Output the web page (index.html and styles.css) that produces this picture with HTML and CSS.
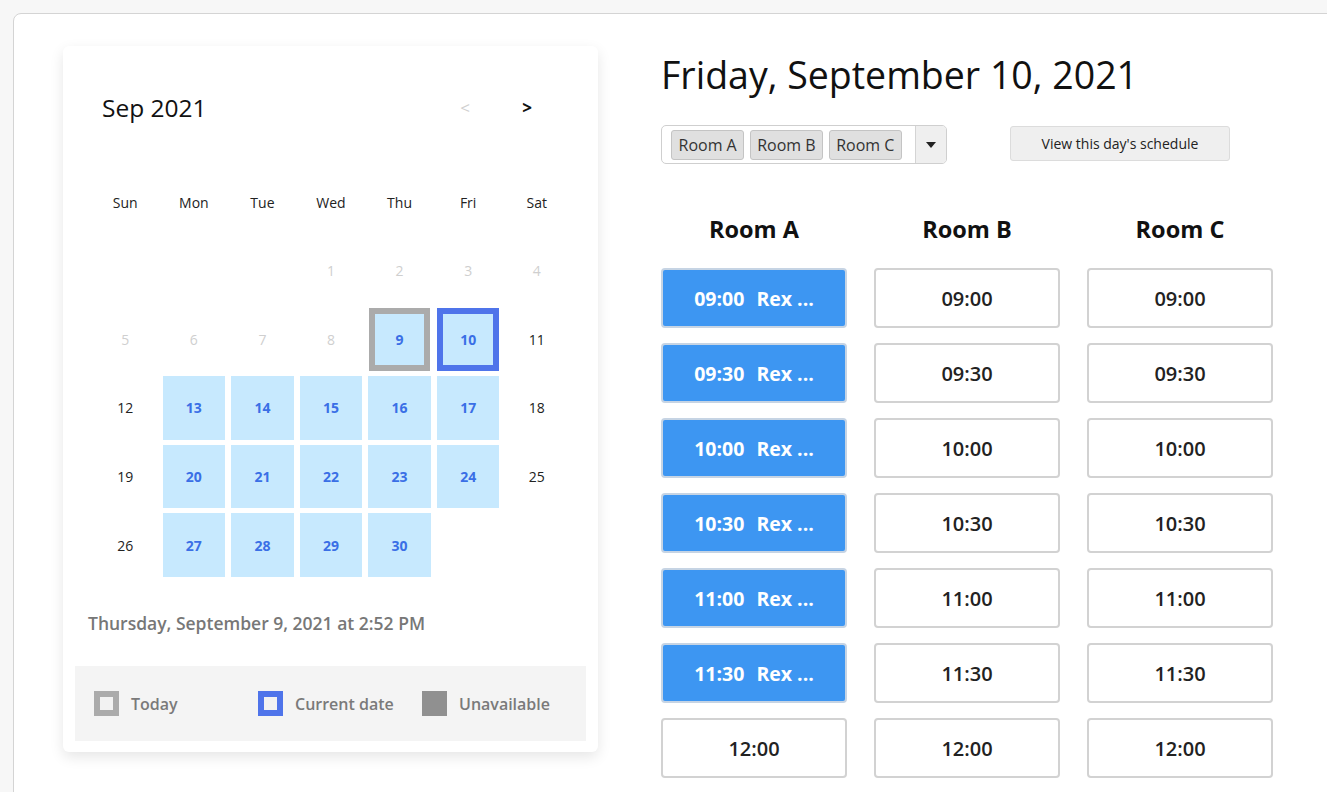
FILE: index.html
```html
<!DOCTYPE html>
<html>
<head>
<meta charset="utf-8">
<link rel="stylesheet" href="styles.css">
</head>
<body>
<div class="page">
  <div class="container">
    <div class="card">
      <div class="cal">
        <div class="cal-head">
          <div class="month">Sep 2021</div>
          <div class="nav">
            <span class="nav-btn prev">&lt;</span>
            <span class="nav-btn next">&gt;</span>
          </div>
        </div>
        <div class="grid">
          <div class="wd">Sun</div><div class="wd">Mon</div><div class="wd">Tue</div><div class="wd">Wed</div><div class="wd">Thu</div><div class="wd">Fri</div><div class="wd">Sat</div>
          <div class="d"></div><div class="d"></div><div class="d"></div>
          <div class="d off">1</div><div class="d off">2</div><div class="d off">3</div><div class="d off">4</div>
          <div class="d off">5</div><div class="d off">6</div><div class="d off">7</div><div class="d off">8</div>
          <div class="d"><span class="box today">9</span></div>
          <div class="d"><span class="box current">10</span></div>
          <div class="d">11</div>
          <div class="d">12</div>
          <div class="d"><span class="box">13</span></div><div class="d"><span class="box">14</span></div><div class="d"><span class="box">15</span></div><div class="d"><span class="box">16</span></div><div class="d"><span class="box">17</span></div>
          <div class="d">18</div>
          <div class="d">19</div>
          <div class="d"><span class="box">20</span></div><div class="d"><span class="box">21</span></div><div class="d"><span class="box">22</span></div><div class="d"><span class="box">23</span></div><div class="d"><span class="box">24</span></div>
          <div class="d">25</div>
          <div class="d">26</div>
          <div class="d"><span class="box">27</span></div><div class="d"><span class="box">28</span></div><div class="d"><span class="box">29</span></div><div class="d"><span class="box">30</span></div>
          <div class="d"></div><div class="d"></div>
        </div>
      </div>
      <div class="now">Thursday, September 9, 2021 at 2:52 PM</div>
      <div class="legend">
        <div class="lg-item"><span class="sw sw-today"></span><span>Today</span></div>
        <div class="lg-item"><span class="sw sw-current"></span><span>Current date</span></div>
        <div class="lg-item"><span class="sw sw-off"></span><span>Unavailable</span></div>
      </div>
    </div>

    <div class="main">
      <h1 class="title">Friday, September 10, 2021</h1>
      <div class="toolbar">
        <div class="multi">
          <div class="tags">
            <span class="tag">Room A</span>
            <span class="tag">Room B</span>
            <span class="tag">Room C</span>
          </div>
          <div class="caret"><svg width="10" height="6" viewBox="0 0 10 6"><path d="M0 0h10L5 6z" fill="#222"/></svg></div>
        </div>
        <button class="btn">View this day's schedule</button>
      </div>
      <div class="rooms">
        <div class="room">
          <div class="room-name">Room A</div>
          <div class="slot busy"><span>09:00</span><span>Rex ...</span></div>
          <div class="slot busy"><span>09:30</span><span>Rex ...</span></div>
          <div class="slot busy"><span>10:00</span><span>Rex ...</span></div>
          <div class="slot busy"><span>10:30</span><span>Rex ...</span></div>
          <div class="slot busy"><span>11:00</span><span>Rex ...</span></div>
          <div class="slot busy"><span>11:30</span><span>Rex ...</span></div>
          <div class="slot">12:00</div>
        </div>
        <div class="room">
          <div class="room-name">Room B</div>
          <div class="slot">09:00</div>
          <div class="slot">09:30</div>
          <div class="slot">10:00</div>
          <div class="slot">10:30</div>
          <div class="slot">11:00</div>
          <div class="slot">11:30</div>
          <div class="slot">12:00</div>
        </div>
        <div class="room">
          <div class="room-name">Room C</div>
          <div class="slot">09:00</div>
          <div class="slot">09:30</div>
          <div class="slot">10:00</div>
          <div class="slot">10:30</div>
          <div class="slot">11:00</div>
          <div class="slot">11:30</div>
          <div class="slot">12:00</div>
        </div>
      </div>
    </div>
  </div>
</div>
</body>
</html>
```

FILE: styles.css
```css
* { box-sizing: border-box; }
html, body { margin: 0; padding: 0; }
body {
  background: #f7f7f7;
  font-family: "Open Sans", "Noto Sans", sans-serif;
  color: #222;
  overflow: hidden;
  width: 1327px;
  height: 792px;
}
.page {
  padding: 13px 0 0 13px;
  height: 792px;
  overflow: hidden;
}
.container {
  width: 1330px;
  height: 900px;
  background: #fff;
  border: 1px solid #d4d4d4;
  border-radius: 8px 0 0 0;
  display: flex;
  align-items: flex-start;
  padding: 32px 0 0 49px;
}
.card {
  width: 535px;
  background: #fff;
  border-radius: 6px;
  box-shadow: 0 5px 14px rgba(0, 0, 0, 0.10);
  padding: 0 12px 11px 12px;
  flex: none;
}
.cal { padding: 0 16px; }
.cal-head {
  height: 122px;
  display: flex;
  align-items: center;
  justify-content: space-between;
  padding: 0 23px 0 11px;
}
.month { font-size: 24.5px; color: #111; }
.nav { display: flex; gap: 22px; }
.nav-btn {
  width: 40px;
  text-align: center;
  font-size: 17px;
  font-weight: 700;
}
.prev { color: #d0d0d0; font-weight: 400; }
.next { color: #111; }
.grid {
  display: grid;
  grid-template-columns: repeat(7, 1fr);
  grid-auto-rows: 68.57px;
  width: 480px;
}
.wd, .d {
  display: flex;
  align-items: center;
  justify-content: center;
  font-size: 14px;
  color: #222;
}
.d.off { color: #cfcfcf; }
.box {
  width: calc(100% - 6px);
  height: calc(100% - 5px);
  display: flex;
  align-items: center;
  justify-content: center;
  background: #c7e9fe;
  color: #3a6fe6;
  font-weight: 700;
}
.box.today { border: 6px solid #ababab; width: calc(100% - 7px); }
.box.current { border: 6px solid #4f74ea; }
.now {
  margin: 33px 0 31px 13px;
  font-size: 17.5px;
  line-height: 23px;
  font-weight: 600;
  color: #777;
}
.legend {
  background: #f4f4f4;
  height: 75px;
  display: flex;
  align-items: center;
  padding: 0 0 0 19px;
}
.lg-item {
  width: 164px;
  display: flex;
  align-items: center;
  gap: 12px;
  font-size: 16px;
  font-weight: 600;
  color: #7a7a7a;
}
.sw { width: 25px; height: 25px; display: block; }
.sw-today { border: 6px solid #ababab; background: #f2f2f2; }
.sw-current { border: 6px solid #4f74ea; background: #f2f2f2; }
.sw-off { background: #909090; }

.main {
  margin-left: 63px;
  flex: 1;
}
.title {
  margin: 4px 0 0 0;
  font-size: 37.5px;
  font-weight: 400;
  line-height: 50px;
  color: #111;
}
.toolbar {
  margin-top: 25px;
  display: flex;
  align-items: flex-start;
  gap: 63px;
}
.multi {
  width: 286px;
  height: 39px;
  border: 1px solid #cfcfcf;
  border-radius: 5px;
  display: flex;
  overflow: hidden;
}
.tags {
  flex: 1;
  display: flex;
  align-items: center;
  gap: 5.5px;
  padding-left: 9px;
}
.tag {
  height: 30px;
  line-height: 28px;
  padding: 0 6.5px;
  background: #e0e0e0;
  border: 1px solid #c4c4c4;
  border-radius: 3px;
  font-size: 16px;
  color: #333;
}
.caret {
  width: 31px;
  background: #efefef;
  border-left: 1px solid #d4d4d4;
  display: flex;
  align-items: center;
  justify-content: center;
}
.btn {
  margin-top: 1px;
  width: 220px;
  height: 35px;
  background: #efefef;
  border: 1px solid #dcdcdc;
  border-radius: 3px;
  font-family: "Open Sans", "Noto Sans", sans-serif;
  font-size: 14px;
  color: #222;
  padding: 0;
}
.rooms {
  margin-top: 51px;
  display: flex;
  gap: 27px;
}
.room {
  width: 186px;
  display: flex;
  flex-direction: column;
  gap: 15px;
}
.room-name {
  text-align: center;
  font-size: 23.5px;
  font-weight: 700;
  line-height: 30px;
  margin-bottom: 9px;
  margin-top: -1px;
  color: #111;
}
.slot {
  height: 60px;
  border: 2px solid #d2d2d2;
  border-radius: 4px;
  display: flex;
  align-items: center;
  justify-content: center;
  gap: 12px;
  font-size: 20px;
  font-weight: 600;
  color: #222;
  background: #fff;
}
.slot.busy {
  background: #3d96f2;
  color: #fff;
  font-weight: 700;
  font-size: 19.5px;
  border-color: #c6d4e4;
}
```
